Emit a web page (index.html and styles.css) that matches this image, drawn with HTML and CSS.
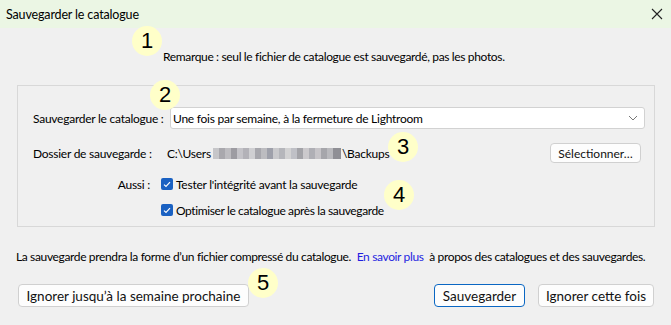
FILE: index.html
```html
<!DOCTYPE html>
<html lang="fr">
<head>
<meta charset="utf-8">
<title>Sauvegarder le catalogue</title>
<link rel="stylesheet" href="styles.css">
</head>
<body>
<div class="window">
  <div class="titlebar">
    <span class="title">Sauvegarder le catalogue</span>
    <svg class="close" width="12" height="12" viewBox="0 0 12 12"><path d="M1 1 L11 11 M11 1 L1 11" stroke="#222" stroke-width="1.1" fill="none"/></svg>
  </div>
  <div class="content">
    <div class="note">Remarque : seul le fichier de catalogue est sauvegardé, pas les photos.</div>
    <div class="group">
      <div class="row row-select">
        <span class="label lab-select">Sauvegarder le catalogue :</span>
        <div class="select">
          <span>Une fois par semaine, à la fermeture de Lightroom</span>
          <svg class="chev" width="10" height="6" viewBox="0 0 10 6"><path d="M1 1 L5 5 L9 1" stroke="#777" stroke-width="1" fill="none"/></svg>
        </div>
      </div>
      <div class="row row-folder">
        <span class="label lab-folder">Dossier de sauvegarde :</span>
        <span class="path">C:\Users<span class="blur"></span>\Backups</span>
        <span class="spacer"></span>
        <button class="btn btn-small">Sélectionner…</button>
      </div>
      <div class="row row-check">
        <span class="label lab-also">Aussi :</span>
        <span class="check"><svg width="8" height="7" viewBox="0 0 8 7"><path d="M1 3.6 L3 5.5 L7 1.2" stroke="#fff" stroke-width="1.2" fill="none"/></svg></span>
        <span>Tester l'intégrité avant la sauvegarde</span>
      </div>
      <div class="row row-check2">
        <span class="label lab-also"></span>
        <span class="check"><svg width="8" height="7" viewBox="0 0 8 7"><path d="M1 3.6 L3 5.5 L7 1.2" stroke="#fff" stroke-width="1.2" fill="none"/></svg></span>
        <span class="opt">Optimiser le catalogue après la sauvegarde</span>
      </div>
    </div>
    <p class="info">La sauvegarde prendra la forme d’un fichier compressé du catalogue. <a class="link">En savoir plus</a> à propos des catalogues et des sauvegardes.</p>
    <div class="actions">
      <button class="btn btn-later">Ignorer jusqu’à la semaine prochaine</button>
      <span class="spacer"></span>
      <button class="btn btn-primary">Sauvegarder</button>
      <button class="btn btn-skip">Ignorer cette fois</button>
    </div>
  </div>
  <span class="badge b1">1</span>
  <span class="badge b2">2</span>
  <span class="badge b3">3</span>
  <span class="badge b4">4</span>
  <span class="badge b5">5</span>
</div>
</body>
</html>
```
FILE: styles.css
```css
html, body {
  margin: 0;
  padding: 0;
  background: #f0f0f0;
}
body {
  font-family: Lato, "Noto Sans", sans-serif;
  font-size: 12px;
  letter-spacing: -0.25px;
  color: #000;
  white-space: nowrap;
}
.window {
  position: relative;
  width: 671px;
  height: 325px;
  overflow: hidden;
}
.titlebar {
  height: 28px;
  background: #ebf6e4;
  display: flex;
  align-items: center;
  padding: 0 8px 0 6px;
}
.title {
  font-size: 12.5px;
  letter-spacing: -0.15px;
  flex: 1;
}
.content {
  padding: 0 16px 0 17px;
}
.note {
  height: 57px;
  box-sizing: border-box;
  padding: 21px 0 0 146px;
  letter-spacing: -0.35px;
}
.group {
  border: 1px solid #d8d8d8;
  height: 142px;
  box-sizing: border-box;
  padding: 21px 9px 0 15px;
}
.row {
  display: flex;
  align-items: center;
}
.row-select { height: 22px; }
.row-folder { height: 20px; margin-top: 14px; }
.row-check { height: 14px; margin-top: 14px; }
.row-check2 { height: 14px; margin-top: 12px; }
.opt { letter-spacing: -0.38px; }
.lab-select { width: 137px; }
.lab-folder { width: 134px; }
.lab-also { width: 117px; text-align: right; margin-right: 11px; }
.select {
  flex: 1;
  height: 22px;
  box-sizing: border-box;
  background: #fff;
  border: 1px solid #d2d2d2;
  border-radius: 3px;
  display: flex;
  align-items: center;
  padding: 0 6px 0 2px;
}
.select span { flex: 1; }
.path {
  display: flex;
  align-items: center;
}
.blur {
  display: inline-block;
  width: 128px;
  height: 11px;
  margin: 0 1px 0 2px;
  background:
    linear-gradient(90deg, #c6c6c9 0 6px, #a9a8ad 6px 12px, #bdbcc0 12px 18px, #9d9ca2 18px 24px, #c4c3c8 24px 30px, #b3b2b8 30px 36px, #cfcfd2 36px 42px, #a7a7ad 42px 48px, #bcbcc0 48px 54px, #9ea0aa 54px 60px, #c9c9cc 60px 66px, #b5b6bb 66px 72px, #d2d2d3 72px 78px, #bfc0c6 78px 84px, #a3a3a8 84px 90px, #cbc9cc 90px 96px, #afafb5 96px 102px, #c6c4c8 102px 108px, #a6a6ab 108px 114px, #b9b9bd 114px 120px, #8f8f95 120px 128px);
}
.spacer { flex: 1; }
.check {
  width: 12px;
  height: 12px;
  border-radius: 2px;
  background: #1a61c2;
  display: flex;
  align-items: center;
  justify-content: center;
  margin-right: 3px;
}
.btn {
  font-family: Lato, "Noto Sans", sans-serif;
  font-size: 13.5px;
  letter-spacing: 0;
  color: #111;
  background: #fdfdfd;
  border: 1px solid #d0d0d0;
  border-radius: 4px;
  height: 23px;
  padding: 0;
  display: flex;
  align-items: center;
  justify-content: center;
  white-space: nowrap;
}
.btn-later { width: 231px; }
.btn-skip { width: 116px; }
.btn-small {
  font-size: 12px;
  height: 20px;
  width: 91px;
  margin-right: 4px;
}
.btn-primary {
  border-color: #0a67c3;
  width: 91px;
  margin-right: 13px;
}
.info {
  margin: 0;
  height: 57px;
  box-sizing: border-box;
  padding: 22px 0 0 0;
  margin-left: -1px;
  letter-spacing: -0.36px;
}
.link {
  color: #1f1fe0;
  margin: 0 3px;
}
.actions {
  display: flex;
  align-items: center;
  margin-left: 1px;
  margin-right: 1px;
}
.badge {
  position: absolute;
  width: 30px;
  height: 30px;
  border-radius: 50%;
  background: #ffffc9;
  font-family: "Liberation Sans", Arial, sans-serif;
  font-size: 22px;
  line-height: 30px;
  text-align: center;
  letter-spacing: 0;
  color: #000;
}
.b1 { left: 132px; top: 26px; }
.b2 { left: 150px; top: 80px; }
.b3 { left: 388px; top: 132px; }
.b4 { left: 384px; top: 180px; }
.b5 { left: 248px; top: 268px; }
```
